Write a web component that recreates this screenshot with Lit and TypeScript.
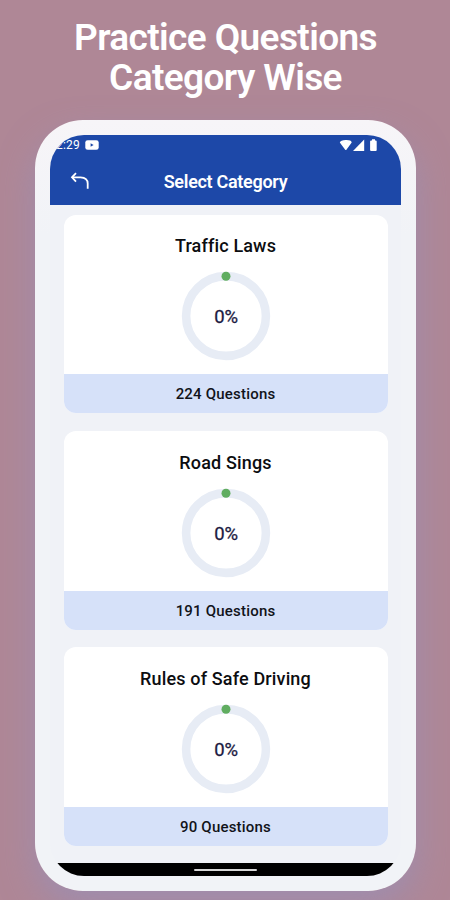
import { LitElement, html, css } from "lit";
import { customElement, property } from "lit/decorators.js";

interface Category {
  name: string;
  count: number;
  percent: number;
}

const CATEGORIES: Category[] = [
  { name: "Traffic Laws", count: 224, percent: 0 },
  { name: "Road Sings", count: 191, percent: 0 },
  { name: "Rules of Safe Driving", count: 90, percent: 0 },
];

@customElement("category-card")
class CategoryCard extends LitElement {
  @property({ attribute: false }) category!: Category;

  static styles = css`
    :host {
      display: flex;
      flex-direction: column;
      height: 198.5px;
      border-radius: 12px;
      background: #fff;
      overflow: hidden;
      text-align: center;
    }
    .body {
      flex: 1;
      display: flex;
      flex-direction: column;
      align-items: center;
    }
    .name {
      margin-top: 20.5px;
      font-size: 18px;
      line-height: 21px;
      font-weight: 500;
      letter-spacing: 0.15px;
      color: #0c0d10;
    }
    .ring {
      display: block;
      width: 90px;
      height: 90px;
      margin-top: 15px;
    }
    .percent {
      font-size: 18.500px;
      font-weight: 400;
      letter-spacing: -0.3px;
      fill: #1b1b42;
      stroke: #1b1b42;
      stroke-width: 0.3px;
      text-anchor: middle;
    }
    .footer {
      height: 39px;
      line-height: 40px;
      background: #d6e1f9;
      font-size: 15px;
      font-weight: 500;
      letter-spacing: 0.2px;
      color: #111319;
    }
  `;

  render() {
    const { name, count, percent } = this.category;
    return html`
      <div class="body">
        <div class="name">${name}</div>
        <svg class="ring" viewBox="0 0 90 90">
          <circle cx="45" cy="45" r="39.9" fill="none" stroke="#e7ecf5" stroke-width="8.6" />
          <circle cx="45" cy="5.2" r="4.5" fill="#60ad60" />
          <text class="percent" x="45" y="52.3">${percent}%</text>
        </svg>
      </div>
      <div class="footer">${count} Questions</div>
    `;
  }
}

@customElement("app-root")
class AppRoot extends LitElement {
  static styles = css`
    :host {
      display: flex;
      flex-direction: column;
      align-items: center;
      width: 450px;
      height: 900px;
      overflow: hidden;
      background: #af8796;
      font-family: Roboto, sans-serif;
    }
    .headline {
      margin: 18px 0 0 1px;
      height: 102px;
      font-size: 37px;
      line-height: 40px;
      font-weight: 600;
      letter-spacing: -0.6px;
      color: #fff;
      text-align: center;
      white-space: nowrap;
    }
    .phone {
      box-sizing: border-box;
      width: 381px;
      height: 771px;
      flex: none;
      margin-left: 1px;
      padding: 15px;
      border-radius: 48px;
      background: linear-gradient(#f7f5f8, #f1f3f7 15%, #f1f3f7);
      box-shadow: 0 16px 34px rgba(152, 144, 184, 0.7);
    }
    .screen {
      display: flex;
      flex-direction: column;
      height: 741px;
      border-radius: 34px;
      background: #f0f2f7;
      overflow: hidden;
    }
    .top {
      height: 70px;
      flex: none;
      background: #1d48a8;
      color: #fff;
    }
    .status {
      display: flex;
      align-items: center;
      height: 20px;
      padding: 0 23px 0 6px;
      font-size: 12px;
      letter-spacing: 0.2px;
    }
    .youtube {
      margin-left: 5px;
    }
    .system {
      margin-left: auto;
    }
    .bar {
      display: grid;
      grid-template-columns: 60px 1fr 60px;
      align-items: center;
      height: 52px;
    }
    .back {
      margin-left: 20px;
    }
    .title {
      font-size: 18px;
      font-weight: 600;
      letter-spacing: -0.3px;
      text-align: center;
    }
    .list {
      flex: 1;
      display: flex;
      flex-direction: column;
      gap: 17.9px;
      padding: 9.7px 13.5px 0;
    }
    .nav {
      display: flex;
      align-items: center;
      justify-content: center;
      height: 13.5px;
      flex: none;
      background: #000;
    }
    .handle {
      width: 63px;
      height: 2.5px;
      margin-top: 1px;
      border-radius: 2px;
      background: #d8d8d8;
    }
  `;

  render() {
    return html`
      <h1 class="headline">Practice Questions<br />Category Wise</h1>
      <div class="phone">
        <div class="screen">
          <div class="top">
            <div class="status">
              <span>2:29</span>
              <svg class="youtube" width="14" height="10" viewBox="0 0 14 10">
                <rect x="0.3" y="0.2" width="13.4" height="9.6" rx="2.4" fill="#fff" />
                <path d="M5.6 3.200 8.6 5 5.6 6.800Z" fill="#1d48a8" />
              </svg>
              <svg class="system" width="39" height="14" viewBox="0 0 39 14">
                <path d="M0.8 4.400Q1.500 2.200 6.800 2T12.700 4.400L7.600 11.500Q6.800 12.500 6 11.500Z" fill="#fff" />
                <path d="M25.200 1.500v11.500H14Z" fill="#fff" />
                <path d="M33 1.200h3v1.200h.7q1 0 1 1v8.600q0 1-1 1h-4.600q-1 0-1-1V3.400q0-1 1-1h.9Z" fill="#fff" />
              </svg>
            </div>
            <div class="bar">
              <svg class="back" width="20" height="18" viewBox="0 0 20 18" fill="none" stroke="#fff" stroke-width="1.8">
                <path d="M6 1.200 2 5.300 6 9.600" />
                <path d="M2.300 5.300H10.500Q17.700 5.600 17.700 11.500V16.800" />
              </svg>
              <div class="title">Select Category</div>
            </div>
          </div>
          <div class="list">
            ${CATEGORIES.map((c) => html`<category-card .category=${c}></category-card>`)}
          </div>
          <div class="nav"><div class="handle"></div></div>
        </div>
      </div>
    `;
  }
}
